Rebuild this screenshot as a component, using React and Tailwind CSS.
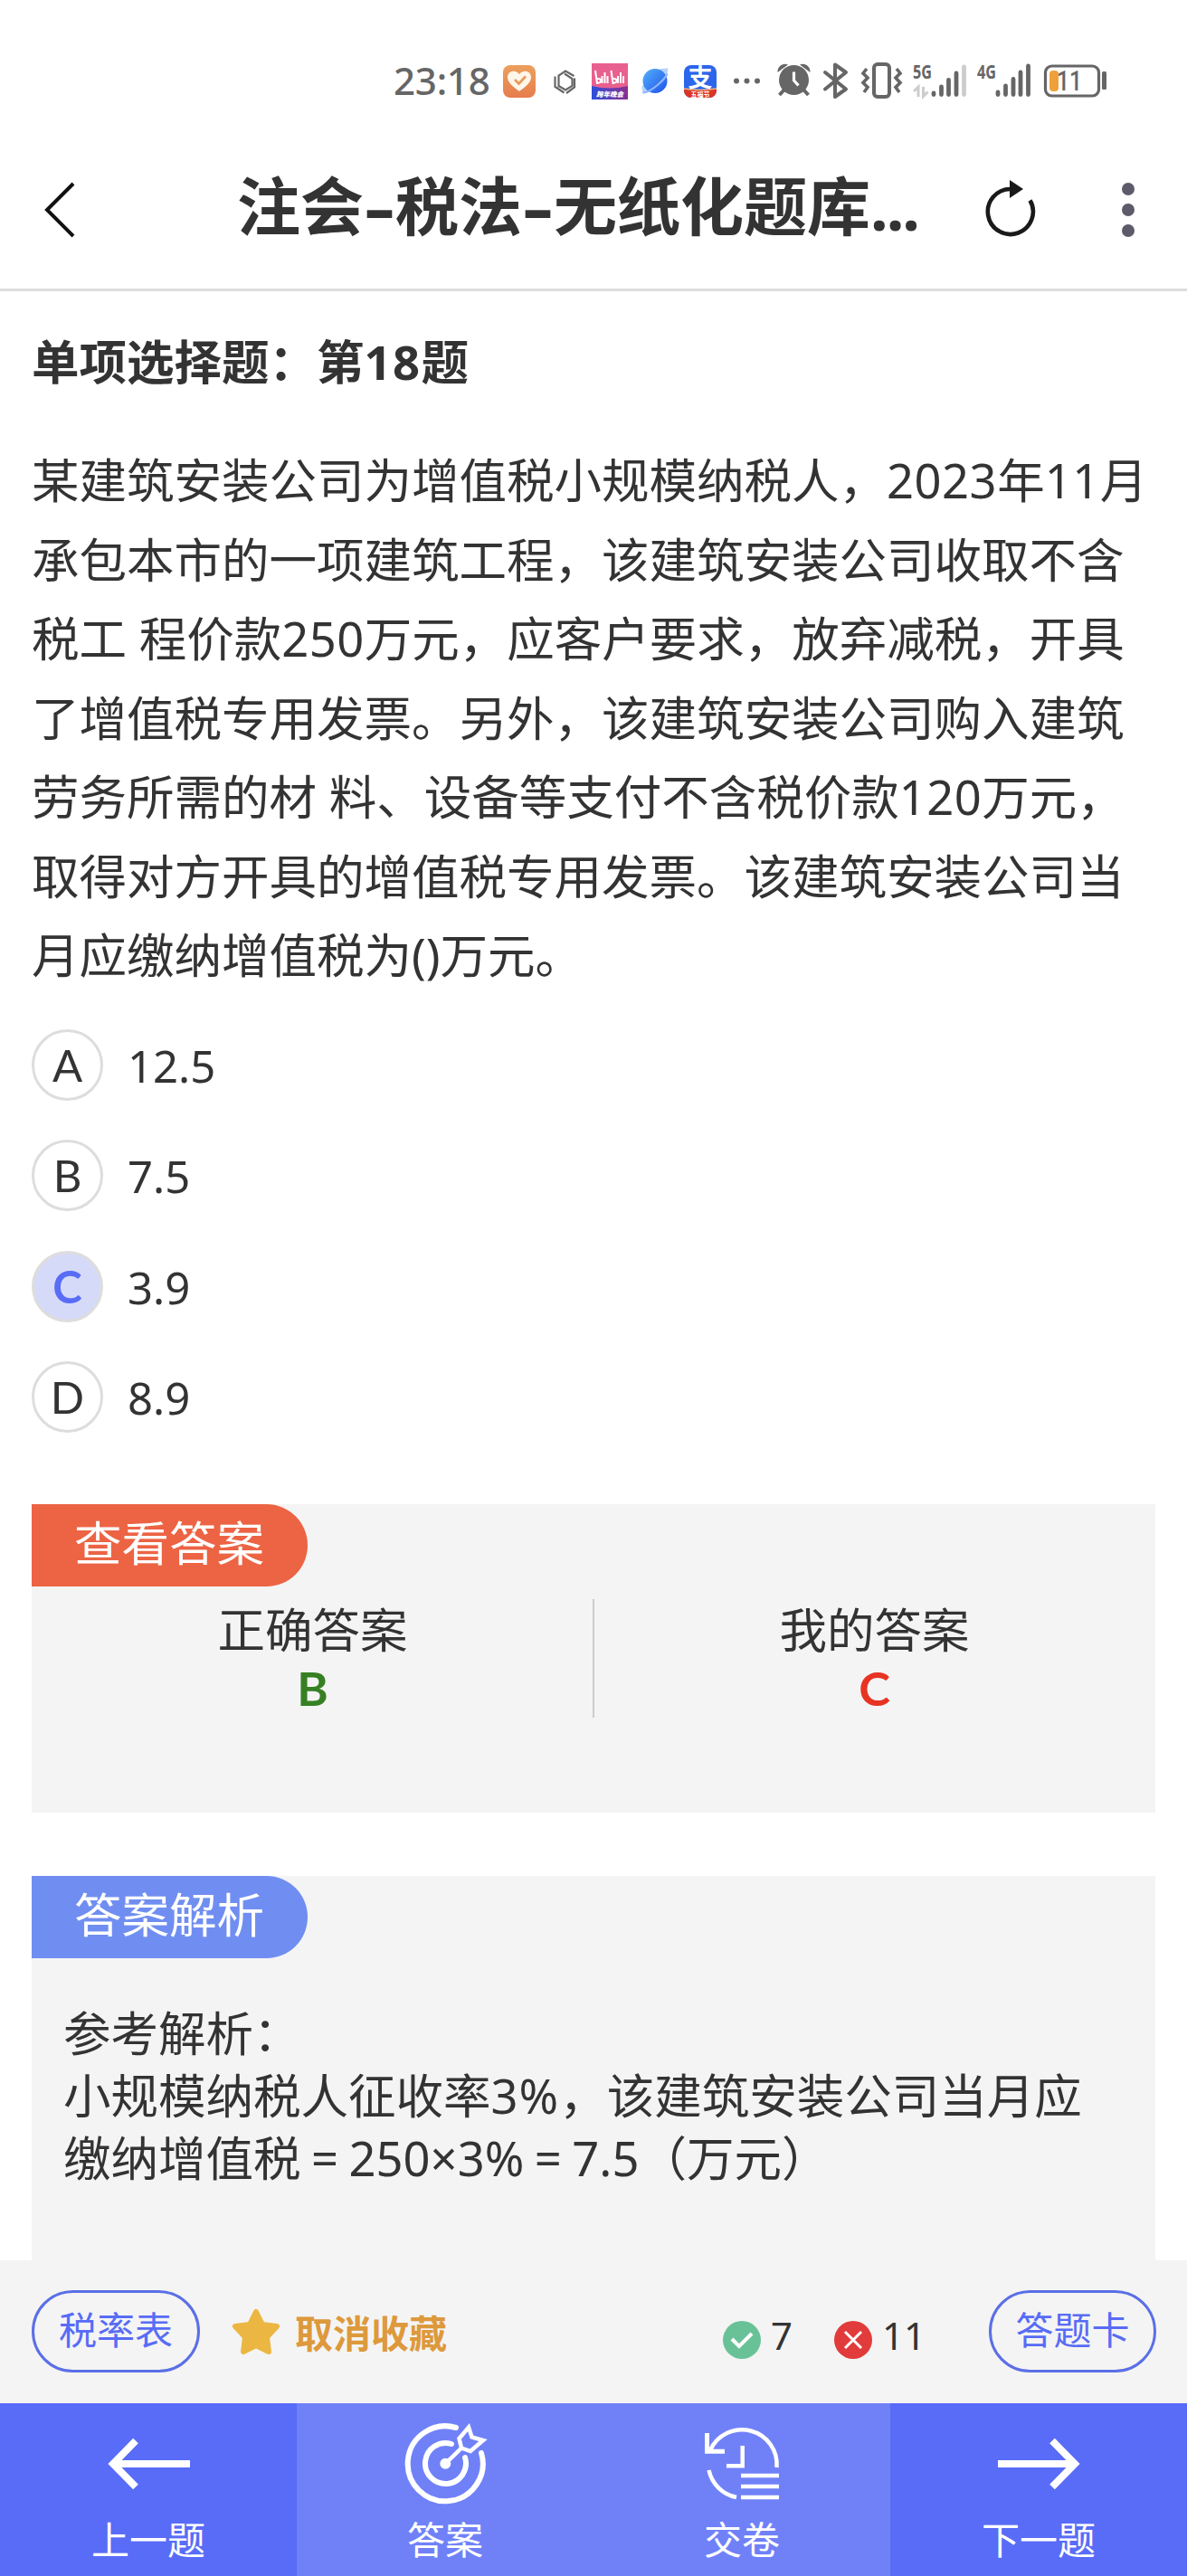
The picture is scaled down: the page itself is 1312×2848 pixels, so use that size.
import React from "react";

const questionLines = [
  "某建筑安装公司为增值税小规模纳税人，2023年11月",
  "承包本市的一项建筑工程，该建筑安装公司收取不含",
  "税工 程价款250万元，应客户要求，放弃减税，开具",
  "了增值税专用发票。另外，该建筑安装公司购入建筑",
  "劳务所需的材 料、设备等支付不含税价款120万元，",
  "取得对方开具的增值税专用发票。该建筑安装公司当",
  "月应缴纳增值税为()万元。",
];

const options = [
  { key: "A", value: "12.5" },
  { key: "B", value: "7.5" },
  { key: "C", value: "3.9", selected: true },
  { key: "D", value: "8.9" },
];

function AppIcons() {
  return (
    <svg className="w-[300px] h-10 ml-[11px] overflow-visible" viewBox="0 0 300 40" fill="none">
      <defs>
        <linearGradient id="health" x1="0" y1="0" x2="0" y2="1">
          <stop stopColor="#eca05f" />
          <stop offset="1" stopColor="#e67d4c" />
        </linearGradient>
        <linearGradient id="bili" x1="0" y1="0" x2="1" y2="0">
          <stop stopColor="#2f4fd8" />
          <stop offset="1" stopColor="#8a2f90" />
        </linearGradient>
        <linearGradient id="globe" x1="0" y1="0" x2="1" y2="1">
          <stop stopColor="#55b2f8" />
          <stop offset="1" stopColor="#1d50ee" />
        </linearGradient>
        <clipPath id="pay"><rect x="203" y="2" width="36" height="36" rx="8" /></clipPath>
      </defs>
      {/* health */}
      <rect x="3" y="2" width="36" height="36" rx="8" fill="url(#health)" />
      <path d="M21 31C14 26 8 21 8 15.500C8 9 16 6 21 12C26 6 34 9 34 15.500C34 21 28 26 21 31Z" fill="#fff6ea" />
      <path d="M16 18l4.500 4.500 7.500-8" stroke="#e99a5c" strokeWidth="2.800" />
      {/* hexagon */}
      <path d="M60.500 14.500V26L70.500 32.500M64.500 26.500V13.500L72 8.500L81.500 14M82 16.500V26.500L73 33M64.500 25L72 29.500L79.500 25V17L71 11.500" stroke="#666" strokeWidth="2.200" />
      {/* bilibili */}
      <rect x="101" y="0" width="40" height="40" fill="#e8608f" />
      <path d="M101 25Q121 30 141 25V40H101Z" fill="url(#bili)" />
      <g stroke="#fff" strokeWidth="2">
        <path d="M105 8l2 14c6 0 5-6 0-5M112.500 14v8M115.500 10v12M118.500 14v8" />
        <path d="M122.500 8l2 14c6 0 5-6 0-5M130 14v8M133 10v12M136 14v8" />
      </g>
      <text x="121" y="36.500" textAnchor="middle" fontSize="7.500" fontWeight="900" fontStyle="italic" fill="#fff">跨年晚会</text>
      {/* planet */}
      <path d="M157 33.500l-.5-8L177 6l8.500-.5-1.500 9-18 16Z" fill="#b6d1fb" />
      <circle cx="171" cy="19.500" r="13.500" fill="url(#globe)" />
      <path d="M158 32.500c7 0 23-13 26.500-21" stroke="#8fb8fb" strokeWidth="2.200" />
      {/* pay */}
      <g clipPath="url(#pay)">
        <rect x="203" y="2" width="36" height="36" fill="#2c66ea" />
        <path d="M203 28Q221 31 239 28V40H203Z" fill="#db3525" />
        <path d="M203 28Q221 31 239 28" stroke="#f4b183" strokeWidth="1.500" />
      </g>
      <text x="221" y="26" textAnchor="middle" fontSize="27" fontWeight="700" fill="#fff">支</text>
      <text x="221" y="36.500" textAnchor="middle" fontSize="7" fontWeight="700" fill="#fff">五福节</text>
      <g fill="#666">
        <circle cx="261" cy="19.500" r="3" />
        <circle cx="272.500" cy="19.500" r="3" />
        <circle cx="284" cy="19.500" r="3" />
      </g>
    </svg>
  );
}

function SystemIcons() {
  return (
    <svg className="w-[370px] h-10 ml-[5px] overflow-visible" viewBox="0 0 370 40" fill="none">
      {/* alarm */}
      <g fill="#666">
        <circle cx="19.500" cy="18.500" r="16.500" />
        <path d="M1.500 10C1 4 7-1 13 1.500ZM37.500 10C38 4 32-1 26 1.500Z" />
      </g>
      <path d="M9 29l-5.500 6M30 29l5.500 6" stroke="#666" strokeWidth="4" />
      <path d="M19.500 9.500v9.500l5 5.500" stroke="#fff" strokeWidth="3.200" />
      {/* bluetooth */}
      <path d="M54 10l23 18.500-12 8.500V1.500l12 8.500L54 28.500" stroke="#666" strokeWidth="4" strokeLinejoin="round" strokeLinecap="round" />
      {/* vibrate */}
      <rect x="108" y="1" width="17" height="36" rx="4" stroke="#666" strokeWidth="4" />
      <path d="M100 6l-4 5 5 5-5 5.500 5 5-4 5.500M133 6l4 5-5 5 5 5.500-5 5 4 5.500" stroke="#666" strokeWidth="3.600" />
      {/* first SIM */}
      <text x="151" y="17" fontSize="22" fontWeight="700" fill="#666" textLength="21" lengthAdjust="spacingAndGlyphs">5G</text>
      <path d="M152 31l5-5v11M162.500 26v10.500l5-5" stroke="#ccc" strokeWidth="3" />
      <g stroke="#666" strokeWidth="4.800" strokeLinecap="round">
        <path d="M174 33v1.500M182.500 26v8.500M190.500 18.500v16M199 11v23.500" />
        <path d="M207.500 4v30.500" stroke="#ccc" />
      </g>
      {/* second SIM */}
      <text x="222" y="17" fontSize="22" fontWeight="700" fill="#666" textLength="21" lengthAdjust="spacingAndGlyphs">4G</text>
      <path d="M245 32v2.500M253.500 25v9.500M262 17.500v17M270 10v24.500M278.500 3v31.500" stroke="#666" strokeWidth="4.800" strokeLinecap="round" />
      {/* battery */}
      <rect x="297.500" y="3" width="59" height="33" rx="7" stroke="#666" strokeWidth="3.200" />
      <rect x="302" y="8" width="10" height="23" rx="4" fill="#efa03c" />
      <text x="310" y="30" fontSize="31" fontWeight="500" fontFamily="Roboto" fill="#666" textLength="28" lengthAdjust="spacingAndGlyphs">11</text>
      <rect x="360" y="9" width="5" height="20" rx="1.500" fill="#666" />
    </svg>
  );
}

function StatusBar() {
  return (
    <div className="h-[144px] pt-[70px] pl-[435px] flex items-start text-[#666]">
      <span className="w-[107px] text-[42px] leading-[38px] font-medium tracking-[-0.2px] whitespace-nowrap">23:18</span>
      <AppIcons />
      <SystemIcons />
    </div>
  );
}

function Header() {
  return (
    <header className="h-[178px] border-b-[3px] border-[#ddd] flex items-start">
      <svg className="w-[34px] h-[62px] ml-[49px] mt-[57px]" viewBox="0 0 34 62" fill="none">
        <path d="M32 2L3 31L32 60" stroke="#111" strokeWidth="4" />
      </svg>
      <h1 className="w-[762px] ml-[179px] mt-[34px] text-[70px] leading-[100px] font-bold whitespace-nowrap">
        注会<span className="inline-block w-[35px] text-center scale-x-150">-</span>税法<span className="inline-block w-[35px] text-center scale-x-150">-</span>无纸化题库
        <span className="tracking-[-2px]">...</span>
      </h1>
      <svg className="w-[60px] h-[66px] ml-[62px] mt-[54px]" viewBox="0 0 60 66" fill="none">
        <path d="M31 11A25 25 0 1 0 52.500 23.500" stroke="#1a1a1a" strokeWidth="4.600" />
        <path d="M30 1L45 11L30 21Z" fill="#1a1a1a" />
      </svg>
      <div className="ml-[94px] mt-[58px] flex flex-col gap-[9px]">
        <i className="size-[14px] rounded-full bg-[#5d5b69]" />
        <i className="size-[14px] rounded-full bg-[#5d5b69]" />
        <i className="size-[14px] rounded-full bg-[#5d5b69]" />
      </div>
    </header>
  );
}

// digits get slightly looser tracking than the CJK text around them
function QuestionLine({ text }) {
  return (
    <p>
      {text.split(/(\d+)/).map((part, i) =>
        i % 2 ? <span key={i} className="tracking-[0.5px]">{part}</span> : part
      )}
    </p>
  );
}

function OptionRow({ option }) {
  return (
    <div className="h-[122.5px] flex items-start">
      <span
        className={
          option.selected
            ? "size-[79px] rounded-full border-[3px] border-[#ddd] bg-[#d6daf9] text-[#586cf5] font-['Lato'] font-bold text-[49px] leading-[73px] text-center"
            : "size-[79px] rounded-full border-[3px] border-[#ddd] font-['Lato'] text-[49px] leading-[73px] text-center"
        }
      >
        {option.key}
      </span>
      <span className="ml-[27px] text-[49px] leading-[80px]">{option.value}</span>
    </div>
  );
}

function Tag({ className, children }) {
  return (
    <div className={"w-[305px] h-[91px] pl-[47px] rounded-r-full text-white text-[52.5px] leading-[86px] " + className}>
      {children}
    </div>
  );
}

function Answer({ label, value, className }) {
  return (
    <div className="w-[621px] text-center text-[52.5px] leading-[64px]">
      <div>{label}</div>
      <div className={"font-['Lato'] font-bold " + className}>{value}</div>
    </div>
  );
}

function NavButton({ label, className, children }) {
  return (
    <button className={"w-[328px] h-[191px] pt-[16px] flex flex-col items-center text-white " + className}>
      {children}
      <span className="mt-[5px] text-[42px] leading-[60px]">{label}</span>
    </button>
  );
}

export default function App() {
  return (
    <div className="w-[1312px] h-[2848px] overflow-hidden bg-white flex flex-col text-[#333] font-['Noto_Sans','Noto_Sans_CJK_SC',sans-serif]">
      <StatusBar />
      <Header />

      <main className="h-[2177px] px-[35px] overflow-hidden">
        <h2 className="mt-[38px] text-[52.5px] leading-[80px] font-bold">
          单项选择题：第<span className="tracking-[1.5px]">18</span>题
        </h2>
        <div className="mt-[47px] text-[52.5px] leading-[87.5px] whitespace-pre">
          {questionLines.map((line) => (
            <QuestionLine key={line} text={line} />
          ))}
        </div>

        <div className="mt-[38px] h-[525px]">
          {options.map((option) => (
            <OptionRow key={option.key} option={option} />
          ))}
        </div>

        <section className="h-[341px] bg-[#f4f4f4]">
          <Tag className="bg-[#ec6444]">查看答案</Tag>
          <div className="mt-[14px] h-[131px] flex items-start">
            <div className="pt-[2px]">
              <Answer label="正确答案" value="B" className="text-[#368023]" />
            </div>
            <div className="w-[2px] h-[131px] -mx-px bg-[#ccc]" />
            <div className="pt-[2px]">
              <Answer label="我的答案" value="C" className="text-[#e73323]" />
            </div>
          </div>
        </section>

        <section className="mt-[70px] h-[425px] bg-[#f4f4f4]">
          <Tag className="bg-[#708ef1]">答案解析</Tag>
          <div className="mt-[48px] pl-[35px] text-[52.5px] leading-[69px] whitespace-nowrap">
            <p>参考解析：</p>
            <p>小规模纳税人征收率<span className="tracking-[1px]">3%</span>，该建筑安装公司当月应</p>
            <p>
              缴纳增值税<span className="inline-block w-[53px] text-center">=</span>250×3%
              <span className="inline-block w-[53px] text-center">=</span>7.5（万元）
            </p>
          </div>
        </section>
      </main>

      <div className="h-[158px] pl-[35px] pt-[33px] bg-[#f4f4f4] flex items-start">
        <button className="shrink-0 w-[186px] h-[91px] rounded-full border-[3px] border-[#5b6fe6] text-[#586cf5] text-[42px] leading-[81px] flex justify-center">税率表</button>
        <svg className="shrink-0 w-[54px] h-[52px] ml-[35px] mt-[20px]" viewBox="0 0 54 52">
          <path d="M27 4L34 18L50 20L39 32L41 48L27 41L13 48L15 32L4 20L20 18Z" fill="#ebb742" stroke="#ebb742" strokeWidth="6" strokeLinejoin="round" />
        </svg>
        <span className="shrink-0 ml-[16px] w-[172px] mt-[18px] text-[42px] leading-[60px] font-bold text-[#dd993c]">取消收藏</span>
        <svg className="shrink-0 size-[42px] ml-[301px] mt-[34px]" viewBox="0 0 42 42" fill="none">
          <circle cx="21" cy="21" r="21" fill="#69c297" />
          <path d="M10 20l8 8 14-14" stroke="#fff" strokeWidth="4" />
        </svg>
        <span className="shrink-0 ml-[11px] w-[70px] mt-[20px] text-[42px] leading-[60px]">7</span>
        <svg className="shrink-0 size-[42px] mt-[34px]" viewBox="0 0 42 42" fill="none">
          <circle cx="21" cy="21" r="21" fill="#e13b3b" />
          <path d="M12 12l18 18M30 12L12 30" stroke="#fff" strokeWidth="3" />
        </svg>
        <span className="shrink-0 ml-[11px] w-[118px] mt-[20px] text-[42px] leading-[60px]">11</span>
        <button className="shrink-0 w-[185px] h-[91px] rounded-full border-[3px] border-[#5b6fe6] text-[#586cf5] text-[42px] leading-[81px] flex justify-center">答题卡</button>
      </div>

      <nav className="h-[191px] flex">
        <NavButton label="上一题" className="bg-[#586cf7]">
          <svg className="size-[100px]" viewBox="0 0 100 100" fill="none">
            <path d="M96 51H12M36 25.500L11 51L36 76.500" stroke="#fff" strokeWidth="8" />
          </svg>
        </NavButton>
        <NavButton label="答案" className="bg-[#7081f8]">
          <svg className="size-[100px]" viewBox="0 0 100 100" fill="none" stroke="#fff" strokeWidth="6" strokeLinecap="round">
            <path d="M62 11A41.500 41.500 0 1 0 90 39" />
            <path d="M57 29A22.500 22.500 0 1 0 72 44" />
            <path d="M50 51L68 33.500M65.500 23L76 10.500L79.500 21.500L92 25L78 37L68 33.500Z" strokeWidth="4.500" />
            <circle cx="50.300" cy="50.700" r="3" />
          </svg>
        </NavButton>
        <NavButton label="交卷" className="bg-[#7081f8]">
          <svg className="size-[100px]" viewBox="0 0 100 100" fill="none" stroke="#fff" strokeWidth="4.500">
            <path d="M15 36A38.500 38.500 0 0 1 88.500 55M13.500 58A39 39 0 0 0 44 88M50.700 31V53.300H33" />
            <path d="M11.500 17V37.200H31" strokeWidth="5" />
            <path d="M49 64H91M49 76H91M49 88H91" />
          </svg>
        </NavButton>
        <NavButton label="下一题" className="bg-[#586cf7]">
          <svg className="size-[100px]" viewBox="0 0 100 100" fill="none">
            <path d="M5 51H89M65 25.500L90 51L65 76.500" stroke="#fff" strokeWidth="8" />
          </svg>
        </NavButton>
      </nav>
    </div>
  );
}
